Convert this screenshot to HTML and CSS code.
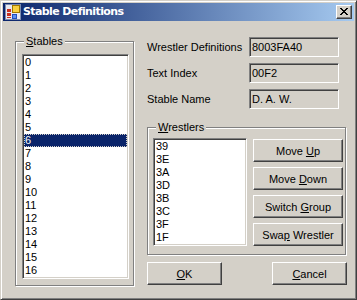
FILE: index.html
```html
<!DOCTYPE html>
<html>
<head>
<meta charset="utf-8">
<link rel="stylesheet" href="styles.css">
</head>
<body>
<div class="window">
  <div class="titlebar">
    <svg class="appicon" width="16" height="16" viewBox="0 0 16 16" shape-rendering="crispEdges">
      <rect x="0" y="0" width="16" height="16" fill="#7C8CB0"/>
      <rect x="1" y="1" width="14" height="14" fill="#E8E8F0"/>
      <rect x="7" y="1" width="8" height="8" fill="#A07800"/>
      <rect x="8" y="2" width="6" height="6" fill="#F8D040"/>
      <rect x="2" y="5" width="4" height="3" fill="#C83020"/>
      <rect x="2" y="9" width="4" height="3" fill="#C83020"/>
      <rect x="2" y="13" width="4" height="1" fill="#C83020"/>
      <rect x="7" y="10" width="5" height="5" fill="#2050C0"/>
      <rect x="8" y="11" width="3" height="3" fill="#6090F0"/>
    </svg>
    <span class="title">Stable Definitions</span>
    <div class="close">
      <svg width="8" height="7" viewBox="0 0 8 7" shape-rendering="crispEdges">
        <path d="M0 0h2v1h-2z M6 0h2v1h-2z M1 1h2v1h-2z M5 1h2v1h-2z M2 2h4v1h-4z M3 3h2v1h-2z M2 4h4v1h-4z M1 5h2v1h-2z M5 5h2v1h-2z M0 6h2v1h-2z M6 6h2v1h-2z" fill="#000"/>
      </svg>
    </div>
  </div>
  <div class="main">
    <div class="group stables">
      <span class="legend"><u>S</u>tables</span>
      <div class="listbox big">
        <div class="item">0</div>
        <div class="item">1</div>
        <div class="item">2</div>
        <div class="item">3</div>
        <div class="item">4</div>
        <div class="item">5</div>
        <div class="item selected">6</div>
        <div class="item">7</div>
        <div class="item">8</div>
        <div class="item">9</div>
        <div class="item">10</div>
        <div class="item">11</div>
        <div class="item">12</div>
        <div class="item">13</div>
        <div class="item">14</div>
        <div class="item">15</div>
        <div class="item">16</div>
      </div>
    </div>
    <div class="right">
      <div class="field"><span class="lbl">Wrestler Definitions</span><div class="tb">8003FA40</div></div>
      <div class="field"><span class="lbl">Text Index</span><div class="tb">00F2</div></div>
      <div class="field"><span class="lbl">Stable Name</span><div class="tb">D. A. W.</div></div>
      <div class="group wrestlers">
        <span class="legend"><u>W</u>restlers</span>
        <div class="wbody">
          <div class="listbox small">
            <div class="item">39</div>
            <div class="item">3E</div>
            <div class="item">3A</div>
            <div class="item">3D</div>
            <div class="item">3B</div>
            <div class="item">3C</div>
            <div class="item">3F</div>
            <div class="item">1F</div>
          </div>
          <div class="btns">
            <div class="btn wide"><span>Move <u>U</u>p</span></div>
            <div class="btn wide"><span>Move <u>D</u>own</span></div>
            <div class="btn wide"><span>Switch <u>G</u>roup</span></div>
            <div class="btn wide"><span>Swa<u>p</u> Wrestler</span></div>
          </div>
        </div>
      </div>
      <div class="okrow">
        <div class="btn dlg"><span><u>O</u>K</span></div>
        <div class="btn dlg"><span><u>C</u>ancel</span></div>
      </div>
    </div>
  </div>
</div>
</body>
</html>
```
FILE: styles.css
```css
html, body {
  margin: 0;
  padding: 0;
  background: #D4D0C8;
}
body {
  font: 11px "Liberation Sans", Arial, sans-serif;
  color: #000;
}
.window {
  width: 357px;
  height: 300px;
  box-sizing: border-box;
  background: #D4D0C8;
  border: 1px solid;
  border-color: #D4D0C8 #404040 #404040 #D4D0C8;
  box-shadow: inset 1px 1px #fff, inset -1px -1px #808080;
  padding: 2px;
  display: flex;
  flex-direction: column;
}
.titlebar {
  height: 18px;
  flex: none;
  background: linear-gradient(to right, #0A246A, #A6CAF0);
  display: flex;
  align-items: center;
  padding: 0 2px;
}
.appicon {
  display: block;
  margin-right: 2px;
}
.title {
  color: #fff;
  font-weight: bold;
  font-size: 11px;
  font-family: "DejaVu Sans", Verdana, sans-serif;
  letter-spacing: -0.6px;
  flex: 1;
  line-height: 18px;
}
.close {
  width: 16px;
  height: 14px;
  box-sizing: border-box;
  background: #D4D0C8;
  border: 1px solid;
  border-color: #fff #404040 #404040 #fff;
  box-shadow: inset -1px -1px #808080;
  display: flex;
  align-items: center;
  justify-content: center;
  padding-bottom: 1px;
}
.close svg { display: block; }
.main {
  display: flex;
  align-items: flex-start;
  padding: 16px 0 0 12px;
}
.group {
  position: relative;
  box-sizing: border-box;
  border: 1px solid #808080;
  box-shadow: inset 1px 1px #fff, 1px 1px #fff;
}
.legend {
  position: absolute;
  top: -8px;
  left: 8px;
  padding: 0 2px;
  background: #D4D0C8;
  line-height: 14px;
}
.stables {
  margin-top: 4px;
  width: 119px;
  height: 245px;
  padding: 12px 0 0 6px;
}
.listbox {
  box-sizing: border-box;
  background: #fff;
  border: 1px solid;
  border-color: #808080 #fff #fff #808080;
  box-shadow: inset 1px 1px #404040, inset -1px -1px #D4D0C8;
  padding: 1px;
  overflow: hidden;
}
.listbox.big {
  width: 107px;
  height: 225px;
}
.item {
  height: 13px;
  line-height: 13px;
  padding-left: 1px;
  white-space: nowrap;
}
.item.selected {
  background: #0A246A;
  color: #fff;
  outline: 1px dotted #D4D0C8;
  outline-offset: -1px;
}
.right {
  margin-left: 13px;
  display: flex;
  flex-direction: column;
}
.field {
  display: flex;
  align-items: center;
  height: 20px;
  margin-bottom: 6px;
}
.lbl {
  width: 102px;
}
.tb {
  width: 90px;
  height: 20px;
  box-sizing: border-box;
  border: 1px solid;
  border-color: #808080 #fff #fff #808080;
  box-shadow: inset 1px 1px #404040, inset -1px -1px #D4D0C8;
  padding: 0 2px;
  line-height: 18px;
}
.wrestlers {
  margin-top: 12px;
  width: 199px;
  height: 128px;
  padding: 10px 0 0 5px;
}
.wbody {
  display: flex;
  align-items: flex-start;
}
.listbox.small {
  width: 94px;
  height: 108px;
}
.btns {
  margin-left: 6px;
  margin-top: 1px;
  display: flex;
  flex-direction: column;
  gap: 5px;
}
.btn {
  box-sizing: border-box;
  height: 23px;
  background: #D4D0C8;
  border: 1px solid;
  border-color: #fff #404040 #404040 #fff;
  box-shadow: inset -1px -1px #808080;
  display: flex;
  align-items: center;
  justify-content: center;
  white-space: nowrap;
}
.btn.wide { width: 90px; }
.btn.dlg { width: 75px; }
.okrow {
  margin-top: 7px;
  display: flex;
  gap: 50px;
}
```
